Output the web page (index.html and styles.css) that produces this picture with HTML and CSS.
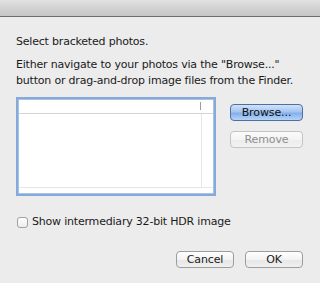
FILE: index.html
```html
<!DOCTYPE html>
<html lang="en">
<head>
    <meta charset="UTF-8">
    <meta name="viewport" content="width=device-width, initial-scale=1.0">
    <title>Merge to HDR</title>
    <link rel="stylesheet" href="styles.css">
</head>
<body>
    <div class="dialog">
        <div class="titlebar"></div>
        <div class="content">
            <p class="heading">Select bracketed photos.</p>
            <p class="desc">Either navigate to your photos via the "Browse..."<br>button or drag-and-drop image files from the Finder.</p>

            <div class="picker">
                <div class="file-list">
                    <div class="list-header">
                        <span class="header-cell"></span>
                        <span class="header-end"></span>
                    </div>
                    <div class="list-body">
                        <div class="list-rows"></div>
                        <div class="list-gutter"></div>
                    </div>
                    <div class="list-footer"></div>
                </div>
                <div class="side-buttons">
                    <button type="button" class="btn btn-default">Browse...</button>
                    <button type="button" class="btn" disabled>Remove</button>
                </div>
            </div>

            <label class="option">
                <input type="checkbox" class="checkbox">
                <span>Show intermediary 32-bit HDR image</span>
            </label>

            <div class="actions">
                <button type="button" class="btn btn-action">Cancel</button>
                <button type="button" class="btn btn-action">OK</button>
            </div>
        </div>
    </div>
</body>
</html>
```

FILE: styles.css
```css
* {
    margin: 0;
    padding: 0;
    box-sizing: border-box;
}

body {
    background: #ececec;
    font-family: 'DejaVu Sans', 'Noto Sans', sans-serif;
    font-size: 11px;
    letter-spacing: -0.2px;
    color: #1a1a1a;
}

.dialog {
    width: 320px;
    height: 283px;
    background: #ececec;
    display: flex;
    flex-direction: column;
}

.titlebar {
    height: 17px;
    background: linear-gradient(#e2e2e2 0%, #d2d2d2 50%, #c5c5c5 100%);
    border-bottom: 1px solid #6c6c6c;
    flex-shrink: 0;
}

.content {
    padding: 17px 16px 0 16px;
    display: flex;
    flex-direction: column;
}

.heading {
    line-height: 16px;
}

.desc {
    margin-top: 7px;
    line-height: 16px;
}

.picker {
    margin-top: 8px;
    display: flex;
    gap: 14px;
}

.file-list {
    width: 200px;
    height: 99px;
    border: 2px solid #85a9d8;
    box-shadow: inset 0 0 0 1px #a9c3e4;
    background: #fff;
    display: flex;
    flex-direction: column;
}

.list-header {
    height: 14px;
    display: flex;
    border-bottom: 1px solid #d4d4d4;
    margin: 1px 1px 0 1px;
}

.header-cell {
    flex: 1;
    border-right: 1px solid #9c9c9c;
    margin: 2px 0 3px 0;
}

.header-end {
    width: 12px;
}

.list-body {
    flex: 1;
    display: flex;
    margin: 0 1px;
}

.list-rows {
    flex: 1;
}

.list-gutter {
    width: 12px;
    border-left: 1px solid #e6e6e6;
}

.list-footer {
    height: 6px;
    border-top: 1px solid #e6e6e6;
    margin: 0 1px 1px 1px;
}

.side-buttons {
    margin-top: 7px;
    display: flex;
    flex-direction: column;
    gap: 10px;
}

.btn {
    font-family: 'DejaVu Sans', 'Noto Sans', sans-serif;
    font-size: 11px;
    letter-spacing: -0.1px;
    height: 17px;
    width: 73px;
    border: 1px solid #9d9d9d;
    border-radius: 4px;
    background: linear-gradient(#ffffff 0%, #f3f3f3 50%, #e6e6e6 51%, #f0f0f0 100%);
    color: #1a1a1a;
    line-height: 15px;
    text-align: center;
}

.btn-default {
    border-color: #4f6f9d;
    color: #111;
    background: linear-gradient(#d0e2fa 0%, #a4c5f2 45%, #84b0ec 55%, #b6d4f8 100%);
}

.btn:disabled {
    color: #8e8e8e;
    border-color: #c4c4c4;
    background: linear-gradient(#fbfbfb 0%, #f4f4f4 50%, #ececec 51%, #f2f2f2 100%);
}

.option {
    margin-top: 18px;
    display: flex;
    align-items: center;
    gap: 4px;
    line-height: 16px;
}

.checkbox {
    appearance: none;
    width: 11px;
    height: 11px;
    margin-left: 1px;
    border: 1px solid #a0a0a0;
    border-radius: 3px;
    background: linear-gradient(#ffffff, #ececec);
}

.actions {
    margin-top: 21px;
    display: flex;
    justify-content: flex-end;
    gap: 11px;
    padding-right: 1px;
}

.btn-action {
    width: 58px;
}
```
